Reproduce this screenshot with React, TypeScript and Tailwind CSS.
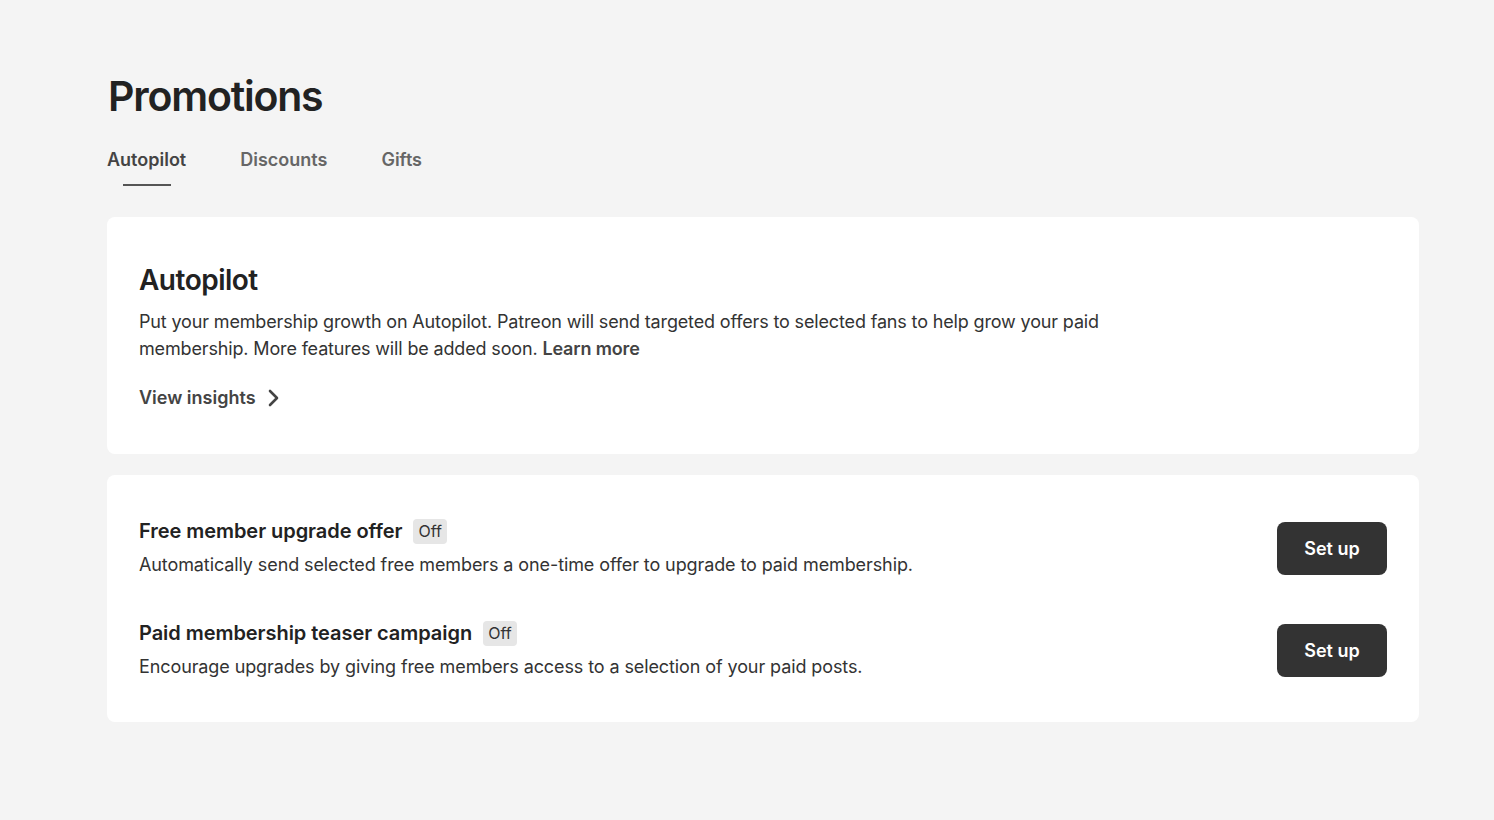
import React from "react";

const font = { fontFamily: "Inter, 'Noto Sans', sans-serif" };

function Row({ title, desc }: { title: string; desc: string }) {
  return (
    <div className="flex items-center justify-between">
      <div className="flex flex-col gap-[8px]">
        <div className="flex items-center gap-[11px]">
          <span className="text-[20px] leading-[26px] font-semibold text-[#222] tracking-[-0.05px]">{title}</span>
          <span className="rounded-[4px] bg-[#e6e6e6] px-[5px] text-[16px] leading-[25px] text-[#333]">Off</span>
        </div>
        <p className="text-[18px] leading-[26px] text-[#333] tracking-[-0.1px]">{desc}</p>
      </div>
      <button className="h-[53px] w-[110px] rounded-[8px] bg-[#333333] text-[18px] font-semibold text-white">Set up</button>
    </div>
  );
}

export default function App() {
  return (
    <div style={font} className="min-h-[820px] bg-[#f4f4f4] pl-[107px] pr-[75px] pt-[70px] pb-10">
      <h1 className="text-[41px] leading-[52px] font-semibold tracking-[-1.2px] text-[#222] pl-[1px]">Promotions</h1>
      <div className="mt-[25px] flex gap-[54px] text-[18px] font-semibold">
        <div className="flex flex-col items-center">
          <span className="leading-[26px] text-[#444]">Autopilot</span>
          <div className="mt-[11px] h-[2px] w-[48px] bg-[#555]" />
        </div>
        <span className="leading-[26px] text-[#666]">Discounts</span>
        <span className="leading-[26px] text-[#666]">Gifts</span>
      </div>
      <div className="mt-[31px] rounded-[8px] bg-white px-[32px] pt-[45px] pb-[43px]">
        <h2 className="text-[28px] leading-[36px] font-semibold tracking-[-0.5px] text-[#222]">Autopilot</h2>
        <p className="mt-[10px] max-w-[970px] text-[18px] leading-[27px] text-[#333] tracking-[-0.15px]">
          Put your membership growth on Autopilot. Patreon will send targeted offers to selected fans to help grow your paid
          membership. More features will be added soon. <span className="font-semibold text-[#444]">Learn more</span>
        </p>
        <div className="mt-[23px] flex items-center gap-[10px] text-[18px] font-semibold text-[#444]">
          <span className="leading-[26px]">View insights</span>
          <svg width="14" height="20" viewBox="0 0 14 20" fill="none">
            <path d="M4 3l7 7-7 7" stroke="#444" strokeWidth="2.6" strokeLinecap="round" strokeLinejoin="round" />
          </svg>
        </div>
      </div>
      <div className="mt-[21px] rounded-[8px] bg-white px-[32px] pt-[43px] pb-[42px] flex flex-col gap-[42px]">
        <Row title="Free member upgrade offer" desc="Automatically send selected free members a one-time offer to upgrade to paid membership." />
        <Row title="Paid membership teaser campaign" desc="Encourage upgrades by giving free members access to a selection of your paid posts." />
      </div>
    </div>
  );
}
